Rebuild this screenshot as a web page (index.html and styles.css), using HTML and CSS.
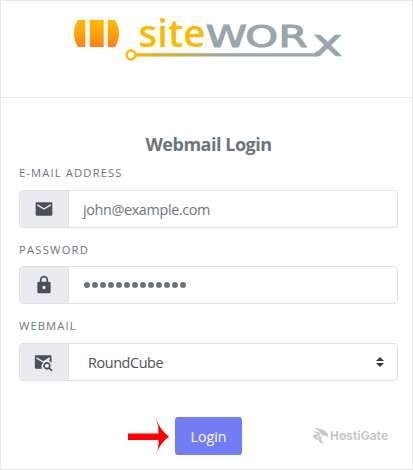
FILE: index.html
```html
<!DOCTYPE html>
<html lang="en">
<head>
<meta charset="utf-8">
<title>Webmail Login</title>
<link rel="stylesheet" href="styles.css">
</head>
<body>
<main class="card">
  <header class="brand">
    <svg class="logo" width="411" height="96" viewBox="1 1 411 96" role="img" aria-label="siteworx">
      <defs>
        <linearGradient id="orange" x1="0" y1="0" x2="0" y2="1"><stop offset="0" stop-color="#ffb800"/><stop offset=".45" stop-color="#ffa50b"/><stop offset="1" stop-color="#ff7e18"/></linearGradient>
        <linearGradient id="rail" gradientUnits="userSpaceOnUse" x1="135" y1="0" x2="230" y2="0"><stop offset="0" stop-color="#f7b500"/><stop offset=".3" stop-color="#dcae2d"/><stop offset="1" stop-color="#98a6ad"/></linearGradient>
      </defs>
      <path fill="url(#orange)" d="M78 20h7.3v27H78q-4-6-4-13.5T78 20zM89.7 20h14v27h-14zM107.7 20h7.3q4 6 4 13.5T115 47h-7.3z"/>
      <text class="logo-site" x="138.5" y="47.3" textLength="67" lengthAdjust="spacingAndGlyphs">site</text>
      <text class="logo-worx" transform="translate(0 47.3) scale(1.4 1)" x="147 175.2 199" y="0">WOR</text>
      <text class="logo-x" transform="translate(312.2 55.8) scale(1.4 1)" x="0" y="0">x</text>
      <path d="M136 53.3H314L317 51L321 52L317 56.5H136z" fill="url(#rail)"/>
      <circle cx="131" cy="55" r="4.4" fill="#fff" stroke="#fdb900" stroke-width="2.5"/>
    </svg>
  </header>
  <form class="login">
    <h1 class="title">Webmail Login</h1>
    <div class="field">
      <label class="label label-email">E-MAIL ADDRESS</label>
      <div class="group">
        <span class="addon"><svg width="20" height="20" viewBox="0 0 24 24"><path d="M20 8l-8 5-8-5V6l8 5 8-5m0-2H3a1 1 0 0 0-1 1v14a1 1 0 0 0 1 1h18a1 1 0 0 0 1-1V5a1 1 0 0 0-1-1z"/></svg></span>
        <span class="control email">john@example.com</span>
      </div>
    </div>
    <div class="field">
      <label class="label label-password">PASSWORD</label>
      <div class="group">
        <span class="addon"><svg width="20" height="20" viewBox="0 0 24 24"><path d="M12 17a2 2 0 0 0 2-2 2 2 0 0 0-4 0 2 2 0 0 0 2 2m6-9a2 2 0 0 1 2 2v10a2 2 0 0 1-2 2H6a2 2 0 0 1-2-2V10a2 2 0 0 1 2-2h1V6a5 5 0 0 1 10 0v2h1m-6-5a3 3 0 0 0-3 3v2h6V6a3 3 0 0 0-3-3z"/></svg></span>
        <span class="control dots"><i></i><i></i><i></i><i></i><i></i><i></i><i></i><i></i><i></i><i></i><i></i><i></i><i></i></span>
      </div>
    </div>
    <div class="field last">
      <label class="label label-webmail">WEBMAIL</label>
      <div class="group">
        <span class="addon"><svg width="20" height="20" viewBox="0 0 24 24"><path d="M15.5 12a4.5 4.5 0 0 1 3.8 6.9l3.1 3.1-1.4 1.4-3.1-3.1A4.5 4.5 0 1 1 15.5 12m0 2a2.5 2.5 0 1 0 0 5 2.5 2.5 0 0 0 0-5M20 4a1 1 0 0 1 1 1v8.5a6.5 6.5 0 0 0-3-3L19 8V6l-8 5-8-5v2l8 5 .5-.3A6.5 6.5 0 0 0 9.5 20H2a1 1 0 0 1-1-1V5a1 1 0 0 1 1-1z"/></svg></span>
        <span class="control select"><span class="choice">RoundCube</span><svg class="caret" width="8" height="10" viewBox="0 0 8 10"><path d="M0 4L4 0l4 4zM0 6h8L4 10z"/></svg></span>
      </div>
    </div>
    <footer class="actions">
      <svg class="arrow" width="42" height="38" viewBox="0 0 42 38"><path d="M0 16.5H30.5Q31 9 28 1.5Q32 13 41 19.8Q32 26 28 37.5Q31 30 30.5 23H0z" fill="#f00"/></svg>
      <button class="submit" type="button">Login</button>
      <span class="host">
        <svg width="17" height="18" viewBox="0 0 17 18"><path d="M2 1q7 0 11 3l3 3v3l-2-1-3-1-1 1Q9 4 2 1zM0 4q6 0 9 3l-2 2Q5 5 0 4zM1 8q4-1 6 0L5 10l1 3Q1 12 1 8zM7 9l3 1-1 3 3 4Q4 15 7 9z"/></svg>
        <span class="host-name">HostiGate</span>
      </span>
    </footer>
  </form>
</main>
</body>
</html>
```

FILE: styles.css
```css
* { box-sizing: border-box; }
body { margin: 0; background: #fff; color: #6c757d; font-family: "Open Sans", "Noto Sans", sans-serif; }
.card { width: 413px; height: 470px; border: 1px solid #e6e6e6; overflow: hidden; }
.brand { height: 97px; border-bottom: 1px solid #eaebed; }
.logo { display: block; }
.logo-site { font: 600 37px "Open Sans", sans-serif; fill: #fdb900; }
.logo-worx { font: 29.8px "DejaVu Sans", sans-serif; fill: #98a6ad; stroke: #98a6ad; stroke-width: 1.1px; }
.logo-x { font: 37px "DejaVu Sans", sans-serif; fill: #98a6ad; stroke: #98a6ad; stroke-width: .7px; }
.login { padding: 34px 14px 0 18px; }
.title { margin: 0; width: 379px; height: 24px; font-size: 18px; font-weight: 700; line-height: 24px; text-align: center; letter-spacing: -.48px; }
.field { width: 379px; margin-top: 8px; }
.label { display: block; height: 17px; margin-bottom: 9px; font-size: 11.2px; line-height: 17px; white-space: nowrap; }
.field + .field { margin-top: 13px; }
.field + .field .label { margin-bottom: 8px; }
.field.last .label { margin-bottom: 9px; }
.group { display: flex; height: 38px; border: 1px solid #dee2e6; border-radius: 4px; overflow: hidden; }
.addon { display: flex; align-items: center; justify-content: center; width: 49px; background: #e9ecef; border-right: 1px solid #dee2e6; }
.addon svg { fill: #495057; }
.control { display: flex; flex: 1; align-items: center; padding-left: 14px; font-size: 14.4px; }
.email { letter-spacing: -.37px; }
.dots { gap: 2px; padding-left: 15px; }
.dots i { width: 6px; height: 6px; border-radius: 50%; background: #6c757d; }
.select { justify-content: space-between; padding: 0 13px 0 19px; color: #495057; }
.choice { letter-spacing: -.4px; }
.caret { fill: #343a40; }
.label-email { letter-spacing: 1.15px; }
.label-password { letter-spacing: 1.25px; }
.label-webmail { letter-spacing: 1.1px; }
.actions { display: flex; align-items: center; margin: 36px 0 0 109px; }
.arrow { flex: none; }
.submit { width: 67px; height: 38px; margin-left: 5px; padding: 0; border: 0; border-radius: 3px; background: #727cf5; color: #fff; font: 14.2px "Open Sans", sans-serif; }
.host { display: flex; align-items: center; gap: 1px; margin-left: 70px; color: #c7c7c7; }
.host svg { fill: #c7c7c7; }
.host-name { font: 700 11.8px/18px Inter, sans-serif; letter-spacing: .1px; }
```
